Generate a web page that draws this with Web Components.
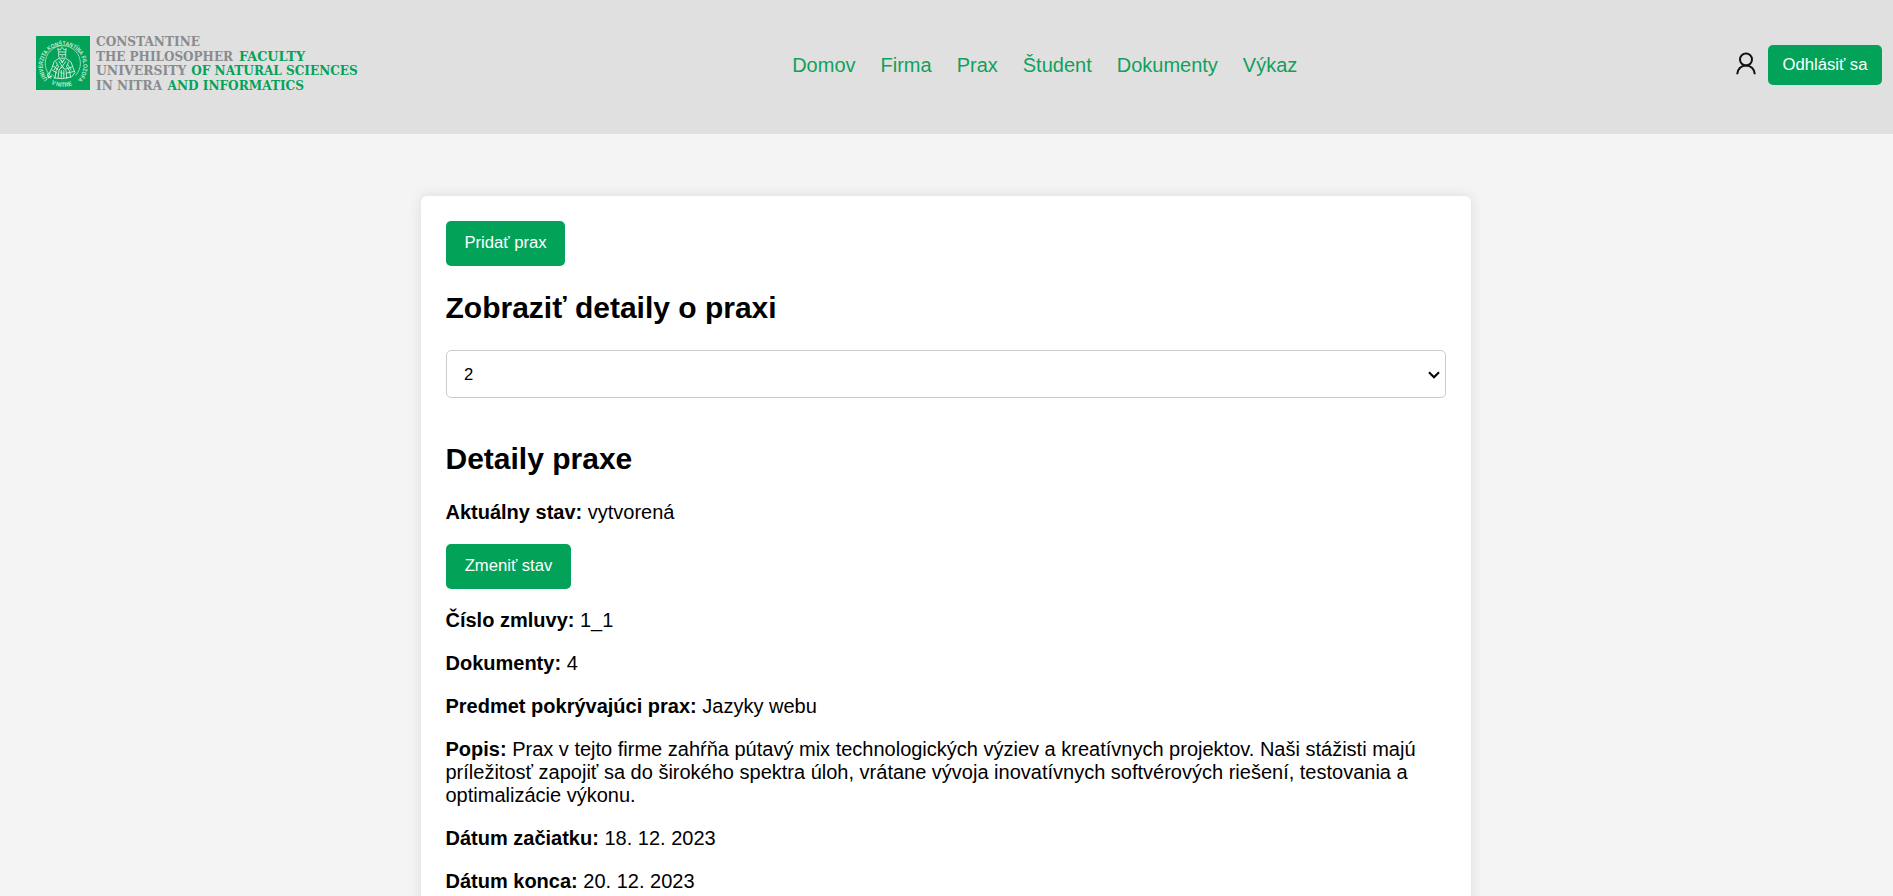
<!DOCTYPE html>
<html lang="sk">
<head>
<meta charset="utf-8">
<title>Prax</title>
<style>
html, body { margin: 0; height: 100%; }
body { font: 20px/23px "Liberation Sans", Arial, sans-serif; color: #000; background: #f4f4f4; overflow: hidden; }
</style>
</head>
<body>
<practice-page></practice-page>
<script>
const define = (name, html) => {
  const t = document.createElement('template');
  t.innerHTML = html;
  customElements.define(name, class extends HTMLElement {
    constructor() {
      super();
      this.attachShadow({ mode: 'open' }).append(t.content.cloneNode(true));
    }
  });
};

define('green-button', `
<style>
:host { display: inline-flex; box-sizing: border-box; width: var(--w, auto); height: var(--h, 45px); }
button { flex: 1; box-sizing: border-box; border: 0; border-radius: 5px; background: #02a359; color: #fff; padding: 0 0 var(--lift, 0px); margin: 0;
  font: 16.667px/19px "Liberation Sans", Arial, sans-serif; white-space: nowrap; }
</style>
<button type="button"><slot></slot></button>`);

define('faculty-logo', `
<style>
:host { display: block; width: 340px; height: 64px; }
svg { display: block; overflow: visible; }
.t text { font: bold 13.3px "DejaVu Serif", serif; }
.g { fill: #898b8e; } .n { fill: #02a359; }
.ring { font: bold 6.1px "Liberation Sans", sans-serif; fill: #c4e9d6; }
</style>
<svg width="340" height="64" viewBox="31 31 340 64">
  <rect x="36" y="36" width="54" height="54" fill="#02a359"/>
  <defs>
    <path id="arc" d="M47.7 79.2 A20.3 20.3 0 1 1 77.5 80.2"/>
    <path id="low" d="M51 83.6 A24.5 24.5 0 0 0 75.5 83.6"/>
  </defs>
  <circle cx="62.8" cy="63.3" r="17.6" fill="none" stroke="#c4e9d6" stroke-width=".7" stroke-dasharray="82 29" transform="rotate(135 62.8 63.3)"/>
  <text class="ring" textLength="93" lengthAdjust="spacingAndGlyphs"><textPath href="#arc" textLength="93" lengthAdjust="spacingAndGlyphs">UNIVERZITA KONŠTANTÍNA FILOZOFA</textPath></text>
  <text class="ring"><textPath href="#low" textLength="22" lengthAdjust="spacingAndGlyphs">V NITRE</textPath></text>
  <g fill="none" stroke="#d5f0e2" stroke-width=".9" stroke-linecap="round" stroke-linejoin="round">
    <path d="M58.4 51.5l-.6-3 2.3 1.4 2-2.6 2 2.6 2.2-1.2-.6 3z"/>
    <path d="M58.7 52.5v4l2 3.7 1.6 1.6 1.8-1.8 1.6-3.5v-4M60 54.5h1.4M63.4 54.5h1.4M62.2 54.8v2M60.8 58.2h3M61.2 60l1 3 1.4-3"/>
    <path d="M58.7 58.5l-4.5 3-2 6-2.5 5-2.4 1.5 1 3.5 3.3-1.5M66 58.5l5 3.5 2 5.5 2 5-3 4"/>
    <path d="M56 62l2.5 4.5L56 71l-1 7M59 61.5l3.3 5 3.4-5M62.3 66.5L59 70l-1 8.5M62.3 66.5l3.7 4 .8 8M68.5 62l-2 4.5 3 4.5 1.2 6.5"/>
    <path d="M53 66l5 3.5M52 70l5 3M66 69l6-2M67 73l7-1.5M54 78q8 2 17-1M50 73l-2 4 3 1M61.3 70.5v8M63.8 70.5v8M57 65l-3 5M68 65l3 5"/>
    <path d="M51.5 76.5l-3 1.5M52 74.5l3 3M60.5 67l3.5 1.5M60 72l4.5 2" stroke-width=".6"/>
  </g>
  <g class="t">
    <text class="g" x="96" y="46" textLength="104" lengthAdjust="spacingAndGlyphs">CONSTANTINE</text>
    <text class="g" x="96" y="60.5" textLength="137" lengthAdjust="spacingAndGlyphs">THE PHILOSOPHER</text>
    <text class="n" x="239" y="60.5" textLength="66" lengthAdjust="spacingAndGlyphs">FACULTY</text>
    <text class="g" x="96" y="75" textLength="90.5" lengthAdjust="spacingAndGlyphs">UNIVERSITY</text>
    <text class="n" x="191.3" y="75" textLength="166.5" lengthAdjust="spacingAndGlyphs">OF NATURAL SCIENCES</text>
    <text class="g" x="96" y="89.6" textLength="66" lengthAdjust="spacingAndGlyphs">IN NITRA</text>
    <text class="n" x="167.5" y="89.6" textLength="136.5" lengthAdjust="spacingAndGlyphs">AND INFORMATICS</text>
  </g>
</svg>`);

define('nav-link', `
<style>:host { display: block; } a { color: #10a05c; text-decoration: none; }</style>
<a href="#"><slot></slot></a>`);

define('user-icon', `
<style>:host { display: block; width: 20px; height: 24px; } svg { display: block; }</style>
<svg width="20" height="24" viewBox="0 0 20 24" fill="none" stroke="#111" stroke-width="2">
  <circle cx="10" cy="7.5" r="6"/><path d="M1.2 22.2C1.4 17.2 5 13.6 10 13.6s8.6 3.6 8.8 8.6"/>
</svg>`);

define('site-header', `
<style>
:host { display: grid; grid-template-columns: 1fr auto 1fr; box-sizing: border-box; height: 134px; background: #e0e0e0; padding: 31px 11px 0 31px; align-items: start; }
nav { display: flex; gap: 25px; padding-top: 23px; margin-left: 176.5px; }
.user { display: flex; justify-content: flex-end; gap: 12px; padding-top: 14px; }
user-icon { margin-top: 7px; }
green-button { --w: 114px; --h: 40px; --lift: 1px; }
</style>
<faculty-logo></faculty-logo>
<nav><slot></slot></nav>
<div class="user"><user-icon></user-icon><green-button>Odhlásiť sa</green-button></div>`);

define('select-box', `
<style>
:host { display: flex; align-items: center; justify-content: space-between; box-sizing: border-box; height: 48px; border: 1px solid #ccc; border-radius: 5px; background: #fff; padding: 0 5px 0 17px; font-size: 16.667px; line-height: 19px; }
svg { margin-top: 2px; }
</style>
<span><slot></slot></span>
<svg width="12" height="8" viewBox="0 0 12 8" fill="none" stroke="#000" stroke-width="2.1"><path d="M1 1.2l5 5 5-5"/></svg>`);

define('detail-row', `
<style>:host { display: block; margin: 20px 0 20px -.5px; } b { font-weight: bold; }</style>
<b><slot name="label"></slot></b> <slot></slot>`);

define('section-title', `
<style>:host { display: block; margin: 25px 0 25px -.5px; } h2 { margin: 0; font-size: 30px; line-height: 34px; }</style>
<h2><slot></slot></h2>`);

define('content-card', `
<style>:host { display: flow-root; box-sizing: border-box; width: 1050px; margin: 62px auto 0; padding: 25px; background: #fff; border-radius: 6px; box-shadow: 0 0 12.5px rgba(0,0,0,.1); position: relative; left: -.5px; }</style>
<slot></slot>`);

define('practice-page', `
<style>
:host { display: block; }
green-button { display: flex; }
select-box { margin-bottom: 44px; }
.add { --w: 119px; --lift: 2px; } .change { --w: 125px; --lift: 2px; }
</style>
<site-header>
  <nav-link>Domov</nav-link><nav-link>Firma</nav-link><nav-link>Prax</nav-link><nav-link>Študent</nav-link><nav-link>Dokumenty</nav-link><nav-link>Výkaz</nav-link>
</site-header>
<content-card>
  <green-button class="add">Pridať prax</green-button>
  <section-title>Zobraziť detaily o praxi</section-title>
  <select-box>2</select-box>
  <section-title>Detaily praxe</section-title>
  <detail-row><span slot="label">Aktuálny stav:</span>vytvorená</detail-row>
  <green-button class="change">Zmeniť stav</green-button>
  <detail-row><span slot="label">Číslo zmluvy:</span>1_1</detail-row>
  <detail-row><span slot="label">Dokumenty:</span>4</detail-row>
  <detail-row><span slot="label">Predmet pokrývajúci prax:</span>Jazyky webu</detail-row>
  <detail-row><span slot="label">Popis:</span>Prax v tejto firme zahŕňa pútavý mix technologických výziev a kreatívnych projektov. Naši stážisti majú príležitosť zapojiť sa do širokého spektra úloh, vrátane vývoja inovatívnych softvérových riešení, testovania a optimalizácie výkonu.</detail-row>
  <detail-row><span slot="label">Dátum začiatku:</span>18. 12. 2023</detail-row>
  <detail-row><span slot="label">Dátum konca:</span>20. 12. 2023</detail-row>
</content-card>`);
</script>
</body>
</html>
